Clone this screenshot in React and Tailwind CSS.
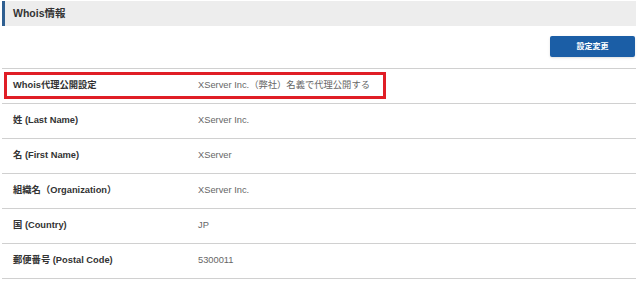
import React from 'react';

const rows = [
  { label: 'Whois代理公開設定', value: 'XServer Inc.（弊社）名義で代理公開する', highlight: true },
  { label: '姓 (Last Name)', value: 'XServer Inc.' },
  { label: '名 (First Name)', value: 'XServer' },
  { label: '組織名（Organization）', value: 'XServer Inc.' },
  { label: '国 (Country)', value: 'JP' },
  { label: '郵便番号 (Postal Code)', value: '5300011' },
];

export default function App() {
  return (
    <div
      className="w-[639px] h-[289px] bg-white overflow-hidden pl-[2px] pr-[3px] pt-[1px]"
      style={{ fontFamily: '"Liberation Sans", "Noto Sans CJK JP", sans-serif' }}
    >
      {/* Section title */}
      <div className="h-[25px] bg-[#ededed] border-l-[3px] border-[#2f5f91] flex items-center pl-[8px]">
        <span className="text-[10.5px] font-bold text-[#333]">Whois情報</span>
      </div>

      {/* Action */}
      <div className="flex justify-end pt-[10px] pb-[11px] pr-[1px]">
        <button className="w-[85px] h-[21px] bg-[#1b5ea6] text-white text-[8px] font-bold rounded-[2px] shadow-sm">
          設定変更
        </button>
      </div>

      {/* Table */}
      <div className="border-t border-[#d0d0d0]">
        {rows.map((row) => (
          <div key={row.label} className="relative h-[35px] border-b border-[#d0d0d0] flex items-center text-[9.3px]">
            <div className="w-[196px] pl-[11px] font-bold text-[#333]">{row.label}</div>
            <div className="text-[#666]">{row.value}</div>
            {row.highlight && (
              <div className="absolute left-[2px] top-[3px] w-[382px] h-[27px] border-[3px] border-[#e01e26] pointer-events-none" />
            )}
          </div>
        ))}
      </div>
    </div>
  );
}
